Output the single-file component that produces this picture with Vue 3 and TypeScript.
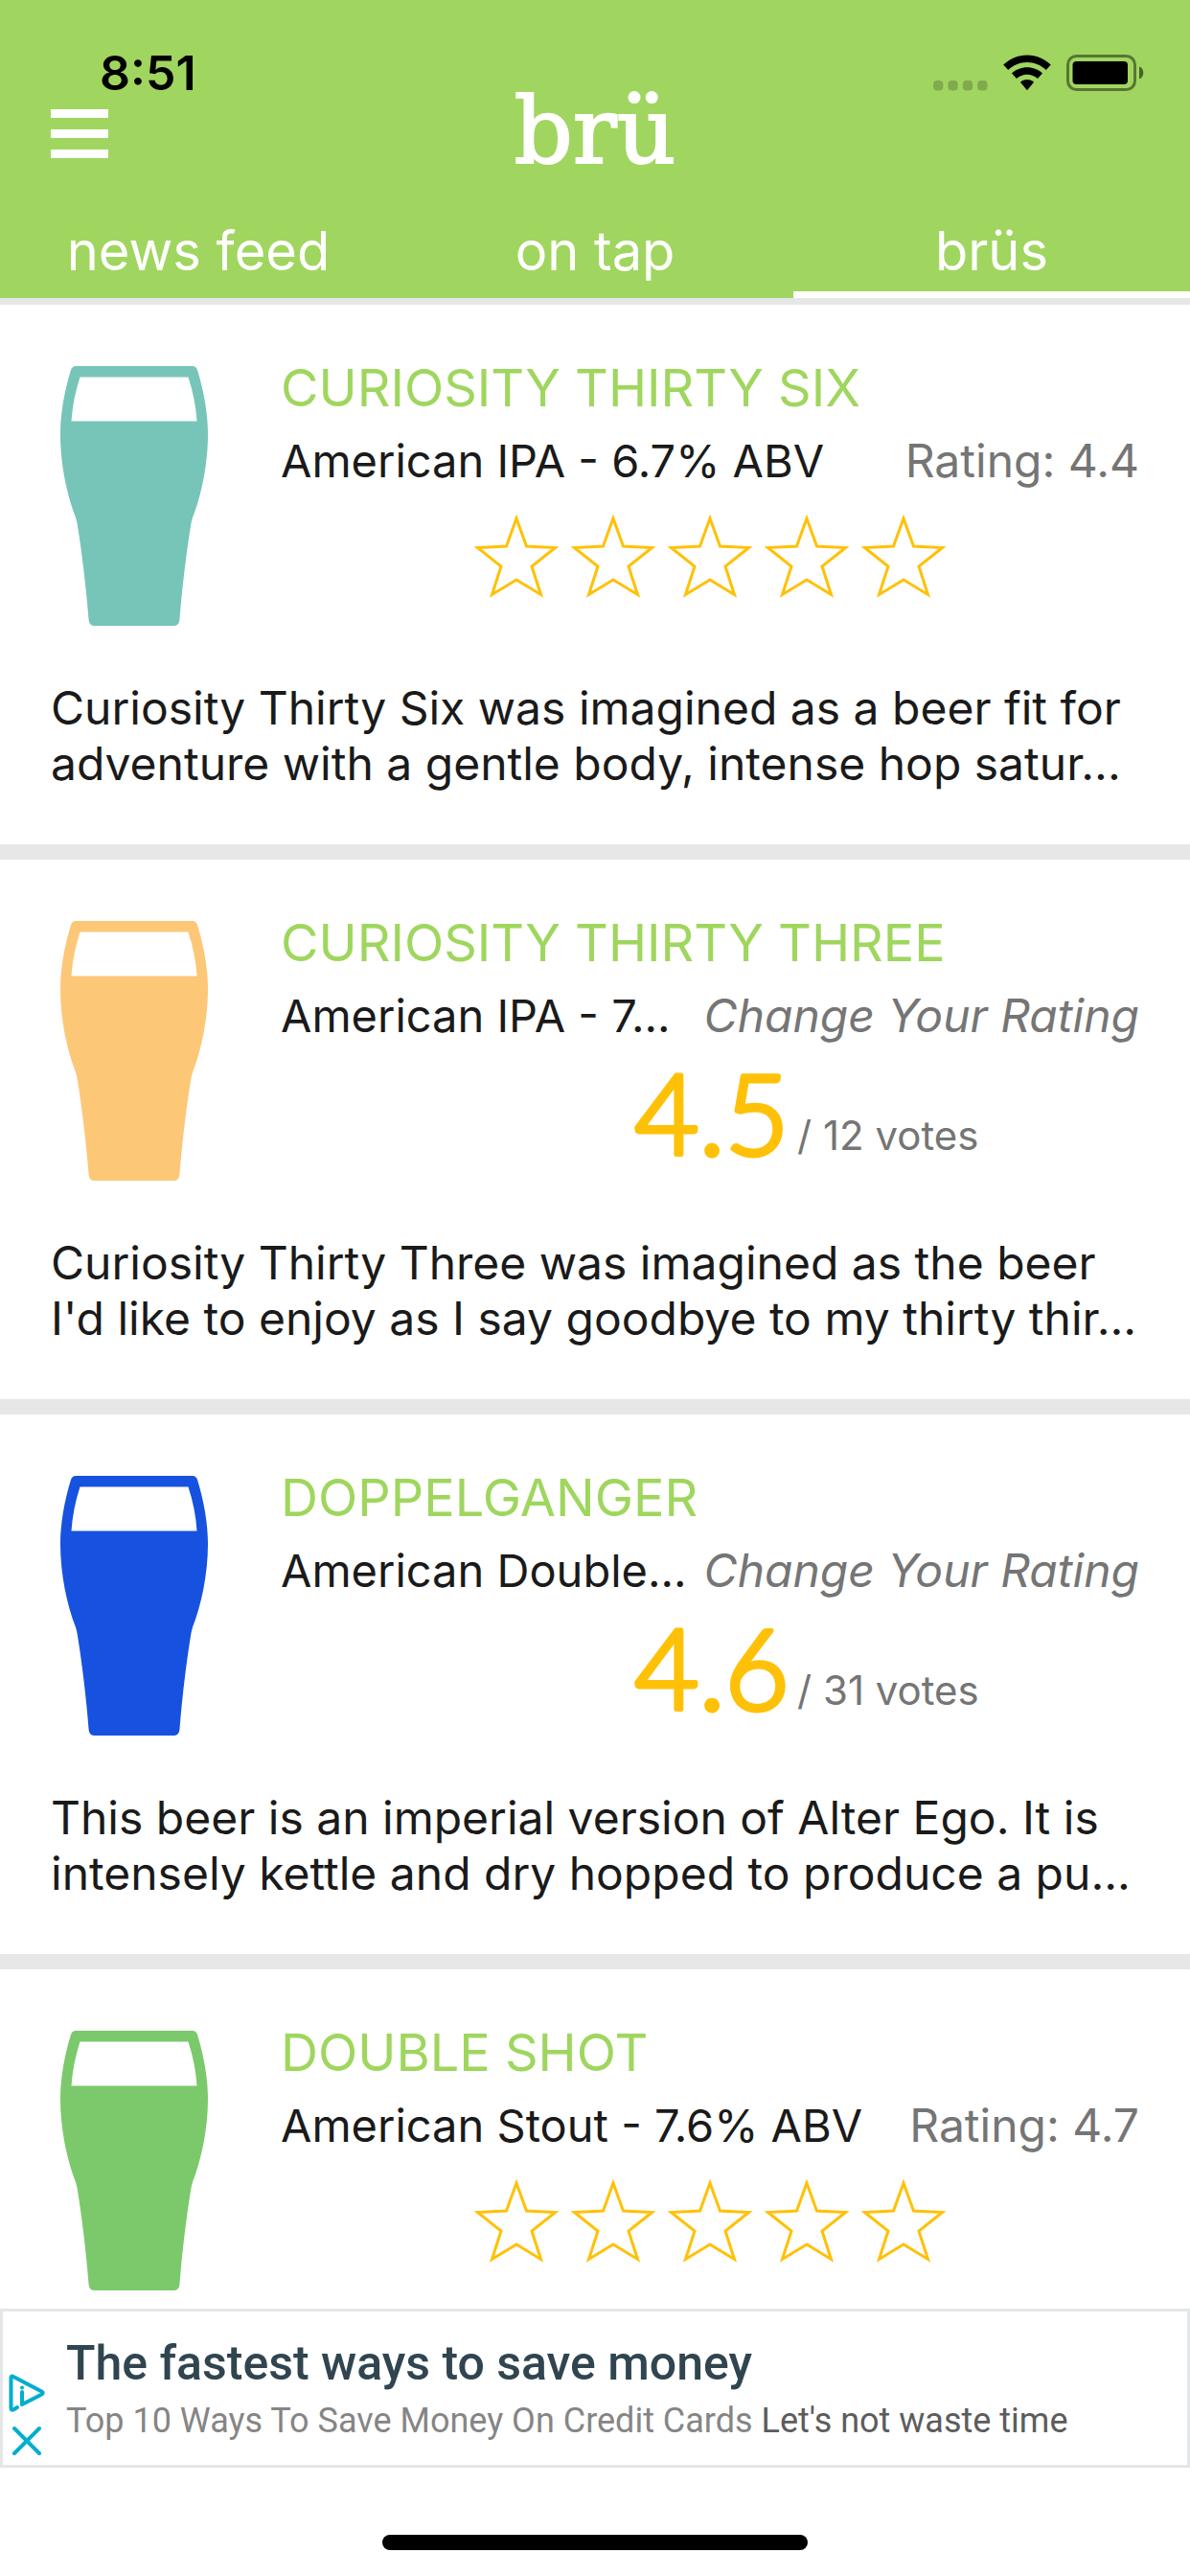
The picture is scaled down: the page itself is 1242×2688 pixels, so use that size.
<script setup lang="ts">
import { ref } from 'vue'

interface Beer {
  name: string
  style: string
  color: string
  rating?: string
  score?: string
  votes?: number
  description: string[]
}

const tabs: string[] = ['news feed', 'on tap', 'brüs']
const activeTab = ref<string>('brüs')

const beers: Beer[] = [
  {
    name: 'CURIOSITY THIRTY SIX',
    style: 'American IPA - 6.7% ABV',
    color: '#77c4b9',
    rating: '4.4',
    description: [
      'Curiosity Thirty Six was imagined as a beer fit for',
      'adventure with a gentle body, intense hop satur...',
    ],
  },
  {
    name: 'CURIOSITY THIRTY THREE',
    style: 'American IPA - 7...',
    color: '#fdc778',
    score: '4.5',
    votes: 12,
    description: [
      'Curiosity Thirty Three was imagined as the beer',
      "I'd like to enjoy as I say goodbye to my thirty thir...",
    ],
  },
  {
    name: 'DOPPELGANGER',
    style: 'American Double...',
    color: '#1652df',
    score: '4.6',
    votes: 31,
    description: [
      'This beer is an imperial version of Alter Ego. It is',
      'intensely kettle and dry hopped to produce a pu...',
    ],
  },
  {
    name: 'DOUBLE SHOT',
    style: 'American Stout - 7.6% ABV',
    color: '#7bc96b',
    rating: '4.7',
    description: [],
  },
]
</script>

<template>
  <div class="app">
    <header class="header">
      <div class="status">
        <span class="time">8:51</span>
        <div class="status-icons">
          <svg class="cell" viewBox="0 0 57 38" aria-hidden="true">
            <rect v-for="n in 4" :key="n" :x="(n - 1) * 15.4" y="27" width="10.4" height="10.4" rx="4" />
          </svg>
          <svg class="wifi" viewBox="0 0 50 38" aria-hidden="true">
            <path d="M25 0.5C34.6 0.5 43.4 4.4 49.8 10.6L44.8 16C39.6 11 32.6 8 25 8S10.400 11 5.200 16L0.200 10.600C6.600 4.400 15.400 0.500 25 0.500Z" />
            <path d="M25 13.200C31.200 13.200 36.800 15.500 41 19.400L36 25C33.100 22.400 29.200 20.700 25 20.700S16.900 22.400 14 25L9 19.400C13.200 15.500 18.800 13.200 25 13.200Z" />
            <path d="M25 26C27.700 26 30.200 27 32.100 28.700L25 37.300L17.900 28.700C19.800 27 22.300 26 25 26Z" />
          </svg>
          <svg class="battery" viewBox="0 0 81 38" aria-hidden="true">
            <rect x="1.500" y="1.500" width="70" height="35" rx="9" fill="none" stroke="#000" stroke-opacity="0.450" stroke-width="3" />
            <rect x="6.500" y="7" width="57.500" height="24" rx="4" />
            <path d="M76 12.500C78.800 13.700 80.300 16 80.300 19S78.800 24.300 76 25.500Z" fill-opacity="0.550" />
          </svg>
        </div>
      </div>
      <div class="nav">
        <button class="menu" type="button" aria-label="Menu">
          <span class="bar"></span>
          <span class="bar"></span>
          <span class="bar"></span>
        </button>
        <h1 class="logo">brü</h1>
      </div>
      <nav class="tabs">
        <button
          v-for="tab in tabs"
          :key="tab"
          type="button"
          class="tab"
          :class="{ active: tab === activeTab }"
          @click="activeTab = tab"
        >
          {{ tab }}
        </button>
      </nav>
    </header>

    <main class="list">
      <article v-for="beer in beers" :key="beer.name" class="card">
        <div class="top">
          <svg class="glass" viewBox="0 0 154 271" :fill="beer.color" aria-hidden="true">
            <path
              fill-rule="evenodd"
              d="M16 0H138Q141.500 0 143 4C150 27 154 50 154 71C154 103 147 135 138 158Q136.500 163 136 167C131 198 127 232 124.500 264Q124 271 119 271H35Q30 271 29.500 264C27 232 23 198 18 167Q17.500 163 16 158C7 135 0 103 0 71C0 50 4 27 11 4Q12.500 0 16 0ZM20.500 11.500C15.500 27 12.500 42 11.500 57.500H142.500C141.500 42 138.500 27 133.500 11.500Z"
            />
          </svg>
          <div class="info">
            <h2 class="name">{{ beer.name }}</h2>
            <div class="row">
              <span class="style">{{ beer.style }}</span>
              <span v-if="beer.rating" class="rating">Rating: {{ beer.rating }}</span>
              <button v-else type="button" class="change">Change Your Rating</button>
            </div>
            <div v-if="beer.rating" class="stars">
              <button v-for="n in 5" :key="n" type="button" class="star" :aria-label="`Rate ${n} of 5`">
                <svg viewBox="0 0 88 89" aria-hidden="true">
                  <path d="M44 5L54.500 34L84.500 35.500L60 55L69.500 84.500L44 69L18.500 84.500L28 55L3.500 35.500L33.500 34Z" />
                </svg>
              </button>
            </div>
            <div v-else class="score">
              <svg class="number" viewBox="0 0 154 92">
                <text x="79" y="90" text-anchor="middle">{{ beer.score }}</text>
              </svg>
              <span class="votes">/ {{ beer.votes }} votes</span>
            </div>
          </div>
        </div>
        <p class="description">
          <span v-for="line in beer.description" :key="line" class="line">{{ line }}</span>
        </p>
      </article>
    </main>

    <aside class="ad">
      <div class="ad-controls">
        <button type="button" class="ad-button" aria-label="Ad choices">
          <svg viewBox="0 0 38 40" aria-hidden="true">
            <path d="M9 35L5 37.500Q2.500 38.500 2.500 36V4Q2.500 1.500 5 3L34.500 18.500Q37 20 34.500 21.500L14 32V19" />
            <path d="M14 14.500V14.600" />
          </svg>
        </button>
        <button type="button" class="ad-button" aria-label="Close ad">
          <svg viewBox="0 0 38 40" aria-hidden="true">
            <path d="M6 7L32 33M32 7L6 33" />
          </svg>
        </button>
      </div>
      <a class="ad-copy" href="#">
        <strong class="ad-title">The fastest ways to save money</strong>
        <span class="ad-text">Top 10 Ways To Save Money On Credit Cards <em>Let's not waste time</em></span>
      </a>
    </aside>
    <footer class="home"><span class="indicator"></span></footer>
  </div>
</template>

<style>
body {
  margin: 0;
  background: #fff;
}
</style>

<style scoped>
.app {
  display: flex;
  flex-direction: column;
  height: 100vh;
  overflow: hidden;
  font-family: Inter, "Liberation Sans", sans-serif;
  color: #1a1a1a;
  background: #fff;
}

button {
  margin: 0;
  padding: 0;
  border: 0;
  background: none;
  font: inherit;
  color: inherit;
}

svg {
  display: block;
}

.header {
  flex: none;
  background: #a0d660;
  border-bottom: 7px solid #e7e7e7;
}

.status {
  display: flex;
  justify-content: space-between;
  padding: 48px 48px 0 104px;
}

.time {
  font-size: 50px;
  line-height: 56px;
  font-weight: 600;
  color: #000;
}

.status-icons {
  display: flex;
  gap: 16px;
  padding-top: 9px;
}

.cell {
  width: 57px;
  height: 38px;
  fill: rgba(0, 0, 0, 0.2);
}

.wifi {
  width: 50px;
  height: 38px;
}

.battery {
  width: 81px;
  height: 38px;
}

.nav {
  display: grid;
  grid-template-columns: 1fr auto 1fr;
  padding: 0 53px 30px;
}

.menu {
  display: flex;
  flex-direction: column;
  gap: 12px;
  width: 60px;
  padding-top: 10px;
}

.bar {
  display: block;
  width: 100%;
  height: 9px;
  background: #fff;
}

.logo {
  margin: 0;
  font-family: "DejaVu Serif", serif;
  font-size: 96px;
  line-height: 66px;
  font-weight: 400;
  color: #fff;
  -webkit-text-stroke: 2px #fff;
}

.tabs {
  display: grid;
  grid-template-columns: repeat(3, 1fr);
  padding-top: 16px;
}

.tab {
  height: 95px;
  padding-top: 4px;
  border-bottom: 7px solid transparent;
  font-size: 56px;
  line-height: 84px;
  color: #fff;
}

.tab.active {
  border-bottom-color: #fff;
}

.list {
  flex: 1;
  min-height: 0;
  overflow: hidden;
  display: flex;
  flex-direction: column;
  gap: 16px;
  background: #e7e7e7;
}

.card {
  flex: none;
  padding: 53px 53px 55px;
  background: #fff;
}

.top {
  display: flex;
  gap: 76px;
}

.glass {
  flex: none;
  width: 154px;
  height: 271px;
  margin: 11px 0 0 10px;
}

.info {
  flex: 1;
  min-width: 0;
}

.name {
  margin: 0;
  font-size: 54px;
  line-height: 68px;
  font-weight: 400;
  color: #9fd65e;
}

.row {
  display: flex;
  justify-content: space-between;
  margin-top: 13px;
  font-size: 48px;
  line-height: 58px;
  white-space: nowrap;
}

.style {
  font-size: 47px;
}

.rating,
.change {
  color: #757575;
}

.change {
  font-style: italic;
}

.stars {
  display: flex;
  justify-content: center;
  gap: 13px;
  margin-top: 26px;
}

.star svg {
  width: 88px;
  height: 89px;
  fill: none;
  stroke: #ffc107;
  stroke-width: 3;
}

.score {
  display: grid;
  grid-template-columns: 1fr 154px 1fr;
  align-items: end;
  margin-top: 26px;
  height: 94px;
}

.number {
  grid-column: 2;
  width: 154px;
  height: 92px;
  margin-bottom: 2px;
  overflow: visible;
  font-family: Lato, sans-serif;
  font-size: 116px;
  font-weight: 300;
  fill: #ffc107;
  stroke: #ffc107;
  stroke-width: 5;
  stroke-linejoin: round;
}

.votes {
  padding-left: 14px;
  font-size: 42px;
  line-height: 48px;
  color: #757575;
}

.description {
  margin: 57px 0 0;
  font-size: 48px;
  line-height: 58px;
  white-space: nowrap;
}

.line {
  display: block;
}

.ad {
  flex: none;
  display: flex;
  border: 3px solid #e5e6e8;
  font-family: Roboto, sans-serif;
  background: #fff;
}

.ad-controls {
  display: flex;
  flex-direction: column;
  gap: 10px;
  padding: 65px 0 5px 6px;
}

.ad-button svg {
  width: 38px;
  height: 40px;
  fill: none;
  stroke: #00aecd;
  stroke-width: 4;
  stroke-linecap: round;
  stroke-linejoin: round;
}

.ad-copy {
  display: flex;
  flex-direction: column;
  gap: 8px;
  padding: 24px 0 0 22px;
  text-decoration: none;
  white-space: nowrap;
}

.ad-title {
  font-size: 50px;
  line-height: 60px;
  font-weight: 500;
  color: #30454f;
}

.ad-text {
  font-size: 36px;
  line-height: 44px;
  color: #858585;
}

.ad-text em {
  font-style: normal;
  color: #5c5c5c;
}

.home {
  flex: none;
  display: flex;
  justify-content: center;
  padding: 70px 0 27px;
}

.indicator {
  width: 444px;
  height: 16px;
  border-radius: 8px;
  background: #000;
}
</style>
